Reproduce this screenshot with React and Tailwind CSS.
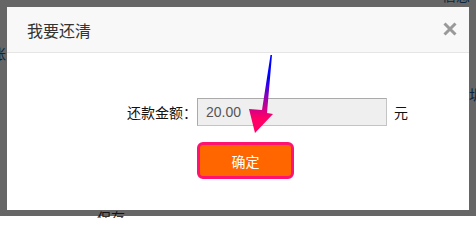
import React from "react";

function Arrow() {
  return (
    <svg className="absolute left-0 top-0 pointer-events-none" width="476" height="218" viewBox="0 0 476 218">
      <defs>
        <linearGradient id="ag" gradientUnits="userSpaceOnUse" x1="0" y1="78" x2="0" y2="118">
          <stop offset="0" stopColor="#0000ff" />
          <stop offset="0.5" stopColor="#9a00b0" />
          <stop offset="1" stopColor="#ff0066" />
        </linearGradient>
      </defs>
      <polygon
        points="270.5,55 262,110 249,109 255,133 273,114 267,113 272,55"
        fill="url(#ag)"
      />
    </svg>
  );
}

export default function App() {
  return (
    <div className="relative w-[476px] h-[218px] bg-white overflow-hidden" style={{ fontFamily: '"Noto Sans CJK SC", sans-serif' }}>
      {/* page behind the dialog */}
      <span className="absolute left-[-8px] top-[46px] text-[14px] leading-none text-[#1a5a9a]">账</span>
      <span className="absolute left-[469px] top-[87px] text-[14px] leading-none text-[#1a5a9a]">圳</span>
      <span className="absolute left-[442px] top-[-12px] text-[14px] leading-none text-[#1a5a9a]">信息</span>
      <span className="absolute left-[97px] top-[210px] text-[14px] leading-none text-[#333]">保存</span>

      <div className="absolute left-0 top-0 w-[476px] h-[216px] border-t-[7px] border-x-[7px] border-b-[6px] border-black/60">
        <div className="flex flex-col w-full h-full bg-white">
          <div className="flex items-center justify-between h-[46px] bg-[#f8f8f8] border-b border-[#e5e5e5] pl-[20px] pr-[12px]">
            <span className="text-[16px] text-[#333] leading-none">我要还清</span>
            <svg width="14" height="14" viewBox="0 0 14 14" className="mt-[-1px]">
              <path d="M1.5 1.5 L12.5 12.5 M12.5 1.5 L1.5 12.5" stroke="#999" strokeWidth="3" strokeLinecap="butt" />
            </svg>
          </div>
          <div className="flex flex-col pt-[45px]">
            <div className="flex items-center pl-[120px]">
              <span className="w-[70px] text-[14px] text-[#111] leading-none">还款金额：</span>
              <div className="w-[190px] h-[28px] flex items-center bg-[#efefef] border border-[#c4c4c4] border-t-[#aaa] border-l-[#aaa] pl-[8px]">
                <span className="text-[14px] text-[#555] leading-none" style={{ fontFamily: '"Liberation Sans", Arial, sans-serif' }}>20.00</span>
              </div>
              <span className="ml-[7px] text-[14px] text-[#111] leading-none">元</span>
            </div>
            <div className="pl-[190px] mt-[16px]">
              <button className="w-[97px] h-[37px] rounded-[6px] border-[3px] border-[#ff1270] bg-[#ff6600] text-white text-[14px] leading-none flex items-center justify-center">
                确定
              </button>
            </div>
          </div>
        </div>
      </div>
      <Arrow />
    </div>
  );
}
